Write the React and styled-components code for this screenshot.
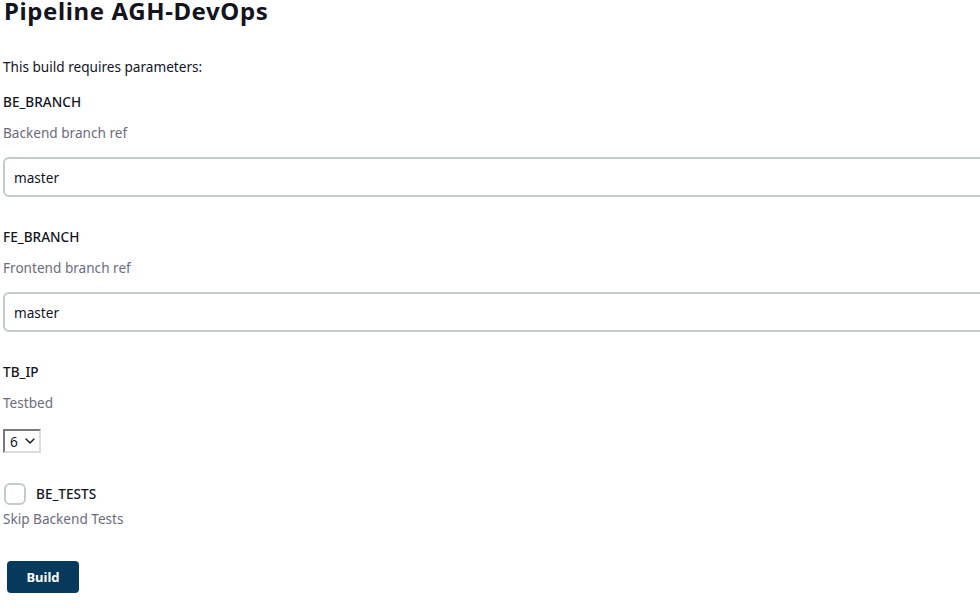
import React from "react";
import styled, { createGlobalStyle } from "styled-components";

const TEXT = "#14141f";
const MUTED = "#6d6b80";
const BORDER = "#c3cbcd";
const PRIMARY = "#063a5d";

const params = [
  { name: "BE_BRANCH", description: "Backend branch ref", value: "master" },
  { name: "FE_BRANCH", description: "Frontend branch ref", value: "master" },
];

function App() {
  return (
    <>
      <GlobalStyle />
      <Page>
        <Title>Pipeline AGH-DevOps</Title>
        <Intro>This build requires parameters:</Intro>

        {params.map(({ name, description, value }) => (
          <Param key={name}>
            <Label>{name}</Label>
            <Description>{description}</Description>
            <TextInput defaultValue={value} />
          </Param>
        ))}

        <Param>
          <Label>TB_IP</Label>
          <Description>Testbed</Description>
          <Select>
            <span>6</span>
            <svg width="10" height="6" viewBox="0 0 10 6">
              <path
                d="M1 1l4 4 4-4"
                fill="none"
                stroke={TEXT}
                strokeWidth="1.4"
                strokeLinecap="round"
                strokeLinejoin="round"
              />
            </svg>
          </Select>
        </Param>

        <CheckParam>
          <CheckRow>
            <Checkbox />
            <CheckLabel>BE_TESTS</CheckLabel>
          </CheckRow>
          <CheckDescription>Skip Backend Tests</CheckDescription>
        </CheckParam>

        <BuildButton>Build</BuildButton>
      </Page>
    </>
  );
}

const GlobalStyle = createGlobalStyle`
  html, body {
    margin: 0;
    background: #fff;
    overflow: hidden;
  }
  body {
    font-family: "Noto Sans", "Open Sans", sans-serif;
    color: ${TEXT};
    font-size: 13.6px;
  }
`;

const Page = styled.div`
  padding: 0 0 0 3px;
  width: 1300px;
`;

const Title = styled.h1`
  margin: 0 0 0 1px;
  font-size: 24px;
  font-weight: 700;
  letter-spacing: 0.6px;
  line-height: 22px;
`;

const Intro = styled.p`
  margin: 35px 0 0;
  line-height: 20px;
`;

const Param = styled.div`
  margin-top: 15px;
  display: flex;
  flex-direction: column;
  align-items: flex-start;

  & + & {
    margin-top: 30px;
  }
`;

const Label = styled.div`
  line-height: 20px;
  font-weight: 500;
`;

const Description = styled.div`
  margin-top: 11px;
  line-height: 20px;
  color: ${MUTED};
`;

const TextInput = styled.input`
  margin-top: 14px;
  box-sizing: border-box;
  width: 100%;
  height: 40px;
  padding: 0 9px;
  border: 2px solid ${BORDER};
  border-radius: 6px;
  font-family: inherit;
  font-size: 13.6px;
  color: ${TEXT};
  outline: none;
`;

const Select = styled.div`
  margin-top: 16px;
  box-sizing: border-box;
  width: 38px;
  height: 24px;
  padding: 0 0 0 5px;
  display: flex;
  align-items: center;
  gap: 7px;
  border: 2px solid;
  border-color: #7a7a7a #dcdcdc #dcdcdc #7a7a7a;
`;

const CheckParam = styled.div`
  margin-top: 30px;
`;

const CheckRow = styled.label`
  display: flex;
  align-items: center;
  gap: 10px;
  padding-left: 1px;
`;

const Checkbox = styled.span`
  box-sizing: border-box;
  width: 22px;
  height: 22px;
  border: 2px solid ${BORDER};
  border-radius: 6px;
`;

const CheckLabel = styled.span`
  line-height: 22px;
  font-weight: 500;
`;

const CheckDescription = styled(Description)`
  margin-top: 4px;
`;

const BuildButton = styled.button`
  margin: 32px 0 0 4px;
  width: 72px;
  height: 32px;
  border: none;
  border-radius: 4px;
  background: ${PRIMARY};
  color: #fff;
  font-family: inherit;
  font-size: 13px;
  font-weight: 700;
  cursor: pointer;
`;

export default App;
